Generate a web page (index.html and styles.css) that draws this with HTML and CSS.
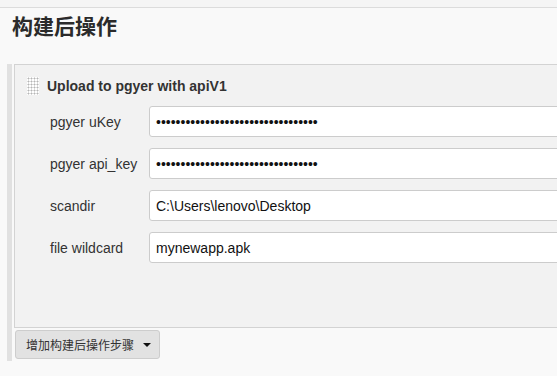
FILE: index.html
```html
<!DOCTYPE html>
<html lang="zh-CN">
<head>
    <meta charset="UTF-8">
    <title>构建后操作</title>
    <link rel="stylesheet" href="styles.css">
</head>
<body>

<div class="top-strip"></div>

<div class="section-header">
    <h1>构建后操作</h1>
</div>

<div class="hetero-list">
    <div class="repeated-chunk">
        <div class="chunk-title">
            <span class="dd-handle"></span>
            <b>Upload to pgyer with apiV1</b>
        </div>

        <div class="setting-row">
            <label for="ukey">pgyer uKey</label>
            <input type="password" id="ukey" value="123456789012345678901234567890123">
        </div>
        <div class="setting-row">
            <label for="apikey">pgyer api_key</label>
            <input type="password" id="apikey" value="123456789012345678901234567890123">
        </div>
        <div class="setting-row">
            <label for="scandir">scandir</label>
            <input type="text" id="scandir" value="C:\Users\lenovo\Desktop">
        </div>
        <div class="setting-row">
            <label for="wildcard">file wildcard</label>
            <input type="text" id="wildcard" value="mynewapp.apk">
        </div>
    </div>

    <div class="add-row">
        <button type="button" class="add-btn">增加构建后操作步骤 <span class="caret"></span></button>
    </div>
</div>

</body>
</html>
```

FILE: styles.css
```css
:root {
    --page-bg: #f9f9f9;
    --chunk-bg: #f2f2f2;
    --line: #d3d3d3;
    --text: #333333;
    --sans: 'Liberation Sans', Arial, 'Noto Sans CJK SC', sans-serif;
}

* {
    box-sizing: border-box;
}

body {
    margin: 0;
    background: var(--page-bg);
    color: var(--text);
    font-family: var(--sans);
    overflow: hidden;
}

.top-strip {
    height: 8px;
    background: #f5f5f5;
    border-bottom: 1px solid #dcdcdc;
}

.section-header {
    height: 56px;
    padding: 7px 0 0 12px;
}

h1 {
    margin: 0;
    font-size: 21px;
    line-height: 21px;
    font-weight: bold;
    font-family: 'Noto Sans CJK SC', sans-serif;
    color: #2b2b2b;
}

/* left bar + the chunk */
.hetero-list {
    margin-left: 7px;
    width: 620px;
    border-left: 5px solid #e1e1e1;
    padding-left: 2px;
    padding-bottom: 2px;
}

.repeated-chunk {
    height: 264px;
    background: var(--chunk-bg);
    border: 1px solid var(--line);
    border-right: none;
    padding: 12px 0 0 12px;
}

.chunk-title {
    display: flex;
    align-items: center;
    gap: 8px;
    height: 18px;
    margin-bottom: 11px;
}

.chunk-title b {
    font-family: var(--sans);
    font-size: 14px;
    color: #333;
}

.dd-handle {
    width: 12px;
    height: 18px;
    background-color: #fff;
    background-image: radial-gradient(circle, #b5b5b5 0.9px, transparent 1.1px);
    background-size: 3px 3px;
    background-position: 0 0;
}

.setting-row {
    display: flex;
    align-items: center;
    height: 31px;
    margin-bottom: 11px;
}

.setting-row label {
    width: 122px;
    padding-left: 23px;
    font-size: 14px;
    color: var(--text);
    flex-shrink: 0;
}

.setting-row input {
    width: 460px;
    height: 31px;
    border: 1px solid #cccccc;
    border-radius: 3px;
    background: #fff;
    padding: 0 6px;
    font-family: var(--sans);
    font-size: 14px;
    color: #111;
}

.add-row {
    padding: 2px 0 0 1px;
}

.add-btn {
    display: flex;
    align-items: center;
    gap: 9px;
    width: 145px;
    height: 29px;
    padding: 0 0 0 10px;
    background: #e2e2e2;
    border: 1px solid #cdcdcd;
    border-radius: 3px;
    font-family: 'Noto Sans CJK SC', sans-serif;
    font-size: 12px;
    color: #333;
}

.caret {
    width: 0;
    height: 0;
    border-left: 4px solid transparent;
    border-right: 4px solid transparent;
    border-top: 4px solid #111;
}
```
